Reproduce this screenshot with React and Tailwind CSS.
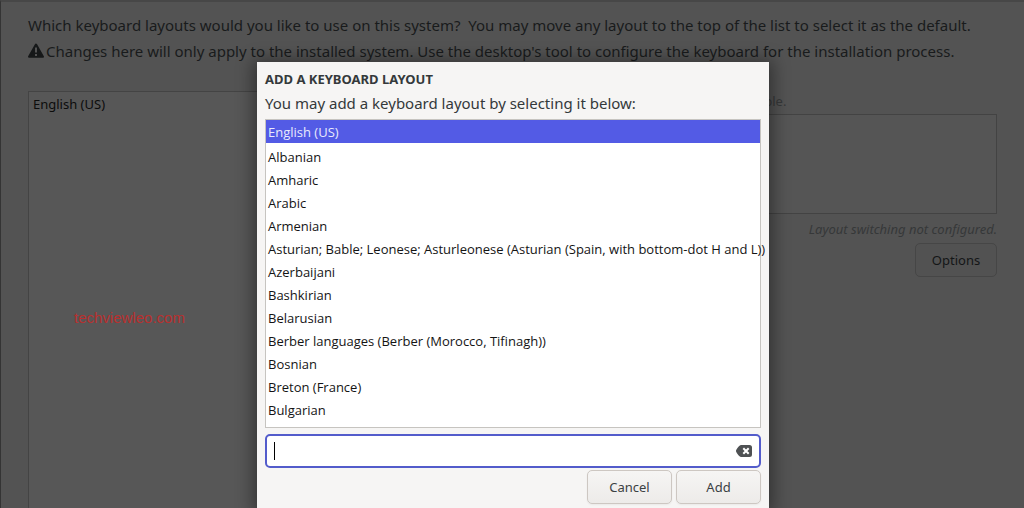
import { useState } from "react";

const LAYOUTS = [
    "English (US)",
    "Albanian",
    "Amharic",
    "Arabic",
    "Armenian",
    "Asturian; Bable; Leonese; Asturleonese (Asturian (Spain, with bottom-dot H and L))",
    "Azerbaijani",
    "Bashkirian",
    "Belarusian",
    "Berber languages (Berber (Morocco, Tifinagh))",
    "Bosnian",
    "Breton (France)",
    "Bulgarian",
];

const WarningIcon = () => (
    <svg viewBox="0 0 16 16" className="h-4 w-4 shrink-0" aria-hidden="true">
        <path
            d="M8 1.600 14.900 13.700H1.100Z"
            fill="#161819"
            stroke="#161819"
            strokeWidth="2.200"
            strokeLinejoin="round"
        />
        <path d="M7 4.500h2v5H7zM7 11h2v2H7z" fill="#535353" />
    </svg>
);

const ClearIcon = () => (
    <svg viewBox="0 0 16 12" className="h-3 w-4" aria-hidden="true">
        <path
            d="M5 0h8.5A2.5 2.5 0 0 1 16 2.5v7a2.5 2.5 0 0 1-2.5 2.5H5C3.4 12 0 7.600 0 6S3.400 0 5 0Z"
            fill="#4e5153"
        />
        <path d="m7.300 3.300 5.400 5.400m0-5.400-5.400 5.400" stroke="#fff" strokeWidth="2" />
    </svg>
);

const DialogButton = ({ children, onClick }) => (
    <button
        type="button"
        onClick={onClick}
        className="h-[34px] w-[85px] rounded-[5px] border border-[#cdc7c2] bg-linear-to-b from-[#f6f5f4] to-[#edebe9] pt-0.5 text-[13px] text-[#3b4143] shadow-xs"
    >
        {children}
    </button>
);

const AddLayoutDialog = () => {
    const [selected, setSelected] = useState(LAYOUTS[0]);
    const [query, setQuery] = useState("");

    return (
        <div
            role="dialog"
            aria-labelledby="dialog-title"
            className="flex w-full max-w-lg flex-col bg-[#f6f5f4] px-2 pt-1.5 shadow-[0_2px_16px_4px_rgba(0,0,0,0.4)]"
        >
            <h2 id="dialog-title" className="text-[13px] leading-[22px] font-bold text-[#34393b]">
                ADD A KEYBOARD LAYOUT
            </h2>
            <p className="pb-[3px] text-[15px] leading-[26px] text-[#34393b]">
                You may add a keyboard layout by selecting it below:
            </p>

            <ul role="listbox" aria-label="Keyboard layouts" className="h-[309px] border border-[#c6c4c0] bg-white font-['Open_Sans',sans-serif]">
                {LAYOUTS.map((layout) => (
                    <li
                        key={layout}
                        role="option"
                        aria-selected={layout === selected}
                        onClick={() => setSelected(layout)}
                        className={`h-[23px] cursor-default px-0.5 text-[13px] leading-[25px] whitespace-nowrap first:mb-0.5
                            ${layout === selected ? "bg-[#535be5] text-[#e9eafc]" : "text-[#141414]"}`}
                    >
                        {layout}
                    </li>
                ))}
            </ul>

            <div className="relative mt-1.5">
                <input
                    type="text"
                    aria-label="Filter layouts"
                    value={query}
                    onChange={(e) => setQuery(e.target.value)}
                    className="block h-[34px] w-full rounded-[5px] border-2 border-[#535ccb] bg-white px-2 text-[13px] text-[#141414] caret-transparent outline-none"
                />
                {query === "" && <span className="absolute top-2 left-[9px] h-[18px] w-px bg-black" />}
                <button
                    type="button"
                    aria-label="Clear"
                    onClick={() => setQuery("")}
                    className="absolute inset-y-0 right-[9px] flex items-center"
                >
                    <ClearIcon />
                </button>
            </div>

            <div className="mt-0.5 flex justify-end gap-1">
                <DialogButton>Cancel</DialogButton>
                <DialogButton>Add</DialogButton>
            </div>
        </div>
    );
};

const App = () => {
    return (
        <div className="relative flex h-screen flex-col overflow-hidden border-t-2 border-l border-t-[#474747] border-l-[#343434] bg-[#535353] font-['Noto_Sans',sans-serif]">
            <header className="px-[27px] pt-[10px] text-[15px] leading-[26px] whitespace-nowrap text-[#191b1c]">
                <p>
                    Which keyboard layouts would you like to use on this system?&nbsp; You may move any layout to the
                    top of the list to select it as the default.
                </p>
                <p className="flex items-center gap-0.5">
                    <WarningIcon />
                    Changes here will only apply to the installed system. Use the desktop's tool to configure the
                    keyboard for the installation process.
                </p>
            </header>

            <main className="grid flex-1 grid-cols-2 gap-3 px-[27px] pt-[27px]">
                <ul className="border border-b-0 border-[#444] bg-[#575757] px-1 py-0.5">
                    <li className="text-[13px] leading-[21px] text-[#0c0c0c]">English (US)</li>
                    <li className="mt-[193px] pl-[41px] font-['Liberation_Sans',sans-serif] text-[15px] leading-[20px] text-[#b8302f]">
                        techviewleo.com
                    </li>
                </ul>

                <section className="flex flex-col items-end">
                    <label htmlFor="layout-test" className="w-full pl-1.5 text-[13px] leading-[20px] text-[#363839]">
                        Testing layouts configuration not available.
                    </label>
                    <textarea
                        id="layout-test"
                        disabled
                        className="mt-[3px] h-[100px] w-full resize-none border border-[#434343] bg-[#555]"
                    />
                    <p className="pt-1 pb-[3px] text-[13px] leading-[22px] text-[#363839] italic">
                        Layout switching not configured.
                    </p>
                    <button
                        type="button"
                        className="h-[34px] w-[82px] rounded-[5px] border border-[#464646] bg-[#525252] pt-0.5 text-[13px] text-[#141617]"
                    >
                        Options
                    </button>
                </section>
            </main>

            <div className="absolute inset-0 flex justify-center pt-[60px] pl-px">
                <AddLayoutDialog />
            </div>
        </div>
    );
};

export default App;
